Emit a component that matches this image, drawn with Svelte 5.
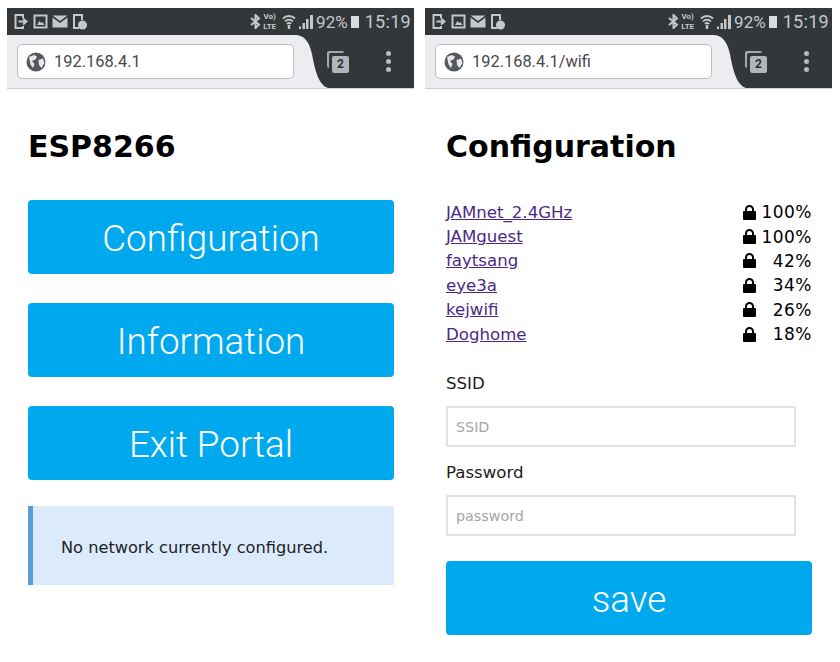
<script lang="ts">
  const networks = [
    { name: "JAMnet_2.4GHz", pct: "100%" },
    { name: "JAMguest", pct: "100%" },
    { name: "faytsang", pct: "42%" },
    { name: "eye3a", pct: "34%" },
    { name: "kejwifi", pct: "26%" },
    { name: "Doghome", pct: "18%" },
  ];
  const menu = ["Configuration", "Information", "Exit Portal"];
</script>

{#snippet chrome(url: string)}
  <div class="status">
    <div class="notes">
      <svg width="16" height="17" viewBox="0 0 16 17" fill="none" stroke="#c4c8ca" stroke-width="2">
        <path d="M10 5V2H2.500v13H10v-2" /><path d="M5.500 8.500h8M10 5.500l3.500 3-3.500 3" />
      </svg>
      <svg width="15" height="15" viewBox="0 0 15 15" fill="none" stroke="#c4c8ca" stroke-width="2">
        <rect x="1.500" y="1.500" width="12" height="12" /><path d="M4 11l2.500-4 1.500 2 1.500-1 2 3z" fill="#c4c8ca" stroke="none" />
      </svg>
      <svg width="16" height="13" viewBox="0 0 16 13">
        <path d="M0.500 0.500h15L8 6z" fill="#c4c8ca" /><path d="M0.500 2.500 8 8l7.500-5.500v10H0.500z" fill="#c4c8ca" />
      </svg>
      <svg width="15" height="17" viewBox="0 0 15 17" fill="none" stroke="#c4c8ca" stroke-width="2">
        <path d="M7 15H2V2h8v5" /><circle cx="10.500" cy="12" r="4.500" fill="#c4c8ca" stroke="none" />
      </svg>
    </div>
    <div class="sys">
      <svg width="11" height="15" viewBox="0 0 11 15" fill="none" stroke="#c4c8ca" stroke-width="2">
        <path d="M1 4l8 6.500L5.500 14V1L9 4.500 1 11" />
      </svg>
      <span class="volte">Vo)<br />LTE</span>
      <svg class="wifi" width="14" height="15" viewBox="0 0 14 15" fill="none" stroke="#c4c8ca" stroke-width="1.800">
        <path d="M1 4.500a8.500 8.500 0 0 1 12 0M3 7.500a5.500 5.500 0 0 1 8 0M5 10a2.500 2.500 0 0 1 4 0" /><path d="M7 11v4" stroke-width="2.500" />
      </svg>
      <svg class="bars" width="14" height="15" viewBox="0 0 14 15" fill="#c4c8ca">
        <rect x="0" y="12.500" width="2" height="2.500" /><rect x="3.500" y="9" width="2.500" height="6" /><rect x="7" y="5" width="2.500" height="10" /><rect x="11" y="1" width="3" height="14" />
      </svg>
      <span class="pct">92%</span>
      <span class="battery"></span>
      <span class="clock">15:19</span>
    </div>
  </div>
  <div class="toolbar">
    <div class="omni">
      <div class="urlbar">
        <svg width="20" height="20" viewBox="0 0 20 20">
          <circle cx="10" cy="10" r="9.500" fill="#55595d" />
          <path d="M3 5 8 3l3 1.500-1.500 3L6 9l2.500 3-1.500 4-2.500-3.500zM12.500 8l4.500-1.500L18.500 11 15.500 16l-2.500-3z" fill="#e8e8ea" />
        </svg>
        <span>{url}</span>
      </div>
    </div>
    <svg class="curve" width="33" height="53" viewBox="0 0 33 53" preserveAspectRatio="none">
      <path d="M0 0C9 0 14 6 17 19 20 36 24 50 33 53H0z" fill="#ececf1" />
    </svg>
    <div class="actions">
      <span class="tabs"><span class="tabnum">2</span></span>
      <span class="dots"><i></i><i></i><i></i></span>
    </div>
  </div>
{/snippet}

{#snippet lock()}
  <svg width="13" height="15" viewBox="0 0 13 15">
    <path d="M3 7V4.500a3.500 3.500 0 0 1 7 0V7" fill="none" stroke="#000" stroke-width="2" />
    <rect x="0" y="6" width="13" height="9" rx="1" />
  </svg>
{/snippet}

<div class="page">
  <section class="phone">
    {@render chrome("192.168.4.1")}
    <div class="content">
      <h1>ESP8266</h1>
      <div class="menu">
        {#each menu as item}
          <button>{item}</button>
        {/each}
      </div>
      <div class="msg">No network currently configured.</div>
    </div>
  </section>

  <section class="phone">
    {@render chrome("192.168.4.1/wifi")}
    <div class="content">
      <h1>Configuration</h1>
      <ul class="nets">
        {#each networks as n}
          <li>
            <a href="#{n.name}">{n.name}</a>
            <span class="q">{@render lock()}<span class="num">{n.pct}</span></span>
          </li>
        {/each}
      </ul>
      <label class="first" for="ssid">SSID</label>
      <input id="ssid" placeholder="SSID" />
      <label for="pw">Password</label>
      <input id="pw" placeholder="password" />
      <button class="save">save</button>
    </div>
  </section>
</div>

<style>
  :global(body) {
    background: #fff;
  }

  .page {
    display: flex;
    gap: 11px;
    padding: 8px 0 0 7px;
    font-family: "DejaVu Sans", sans-serif;
    color: #000;
  }

  .phone {
    width: 407px;
    flex: none;
  }

  .status {
    height: 27px;
    background: #33373a;
    display: flex;
    justify-content: space-between;
    align-items: center;
    padding: 0 3px 0 6px;
    color: #c4c8ca;
    font-family: Roboto, sans-serif;
  }

  .notes,
  .sys {
    display: flex;
    align-items: center;
  }

  .notes {
    gap: 4px;
  }

  .volte {
    font-size: 8px;
    line-height: 10px;
    font-weight: 700;
    margin-left: 2px;
    text-align: center;
  }

  .wifi {
    margin-left: 6px;
  }

  .bars {
    margin-left: 3px;
  }

  .pct {
    font-size: 17px;
    margin-left: 3px;
  }

  .battery {
    width: 8px;
    height: 12px;
    background: #d8dadb;
    margin: 0 6px 0 3px;
  }

  .clock {
    font-size: 18px;
    letter-spacing: 0.3px;
  }

  .toolbar {
    height: 54px;
    display: flex;
    background: #33373a;
    border-bottom: 1px solid #cfd0d2;
    box-sizing: border-box;
  }

  .omni {
    width: 288px;
    flex: none;
    background: #ececf1;
    padding: 9px 0 0 10px;
    box-sizing: border-box;
  }

  .urlbar {
    width: 277px;
    height: 35px;
    box-sizing: border-box;
    background: #fff;
    border: 1px solid #bfbfc2;
    border-radius: 5px;
    display: flex;
    align-items: center;
    gap: 8px;
    padding-left: 8px;
    font-family: Roboto, sans-serif;
    font-size: 16.400px;
    color: #46494c;
  }

  .curve {
    flex: none;
  }

  .actions {
    flex: 1;
    display: flex;
    align-items: center;
    padding-left: 4px;
    gap: 37px;
  }

  .tabs {
    width: 17px;
    height: 17px;
    background: #b3b5b7;
    border-radius: 2px;
    display: flex;
    align-items: center;
    justify-content: center;
    box-shadow: -3px -3px 0 0 #33373a, -5px -5px 0 0 #a5a7a9;
    margin-top: 5px;
  }

  .tabnum {
    font-family: Roboto, sans-serif;
    font-size: 12px;
    font-weight: 700;
    color: #2b2e30;
  }

  .dots {
    display: flex;
    flex-direction: column;
    gap: 3px;
  }

  .dots i {
    width: 5px;
    height: 5px;
    border-radius: 50%;
    background: #b9bbbd;
  }

  .content {
    padding: 0 20px 0 21px;
  }

  h1 {
    font-size: 30px;
    line-height: 38px;
    font-weight: 700;
    margin: 39px 0 34px;
  }

  .menu {
    display: flex;
    flex-direction: column;
    gap: 29px;
  }

  button {
    display: block;
    width: 100%;
    height: 74px;
    padding: 2px 0 0;
    border: 0;
    border-radius: 4px;
    background: #00a9ee;
    color: #fff;
    font-family: Roboto, sans-serif;
    font-size: 36.800px;
    font-weight: 300;
  }

  .msg {
    margin-top: 26px;
    height: 79px;
    box-sizing: border-box;
    background: #dcebfb;
    border-left: 5px solid #5b9bd9;
    padding: 4px 0 0 28px;
    display: flex;
    align-items: center;
    font-size: 16.200px;
    color: #1d2126;
  }

  .nets {
    list-style: none;
    margin: 0;
    padding: 0;
    font-size: 16.600px;
  }

  .nets li {
    height: 24.400px;
    display: flex;
    justify-content: space-between;
    align-items: center;
  }

  .nets a {
    color: #4b2a86;
  }

  .q {
    display: flex;
    align-items: center;
  }

  .num {
    width: 51px;
    margin-left: 5px;
    text-align: right;
    font-size: 17px;
    letter-spacing: 0.5px;
  }

  label {
    display: block;
    font-size: 16.600px;
    line-height: 20px;
    margin: 16px 0 12px;
    color: #1c1c1c;
  }

  label.first {
    margin-top: 28px;
  }

  input {
    display: block;
    width: 350px;
    height: 41px;
    box-sizing: border-box;
    border: 2px solid #e2e2e2;
    padding: 0 8px;
    font-family: "DejaVu Sans", sans-serif;
    font-size: 14.300px;
  }

  input::placeholder {
    color: #a6a6a6;
    opacity: 1;
  }

  .save {
    margin-top: 25px;
  }
</style>
